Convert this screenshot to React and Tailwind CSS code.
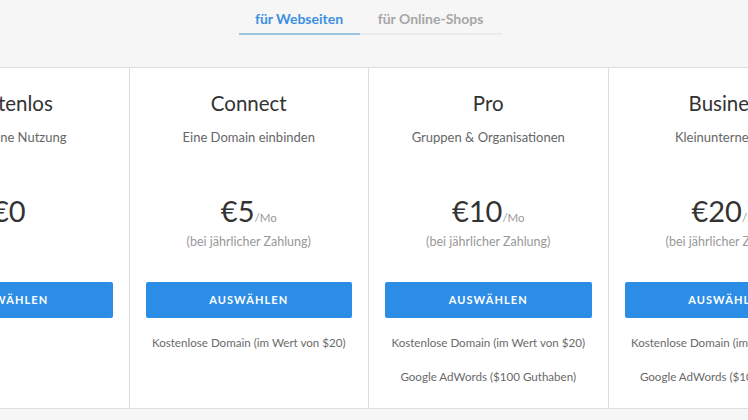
import React from "react";

const plans = [
  { title: "Kostenlos", sub: "Allgemeine Nutzung", price: "€0", mo: false, features: [] },
  { title: "Connect", sub: "Eine Domain einbinden", price: "€5", mo: true, features: ["Kostenlose Domain (im Wert von $20)"] },
  { title: "Pro", sub: "Gruppen & Organisationen", price: "€10", mo: true, features: ["Kostenlose Domain (im Wert von $20)", "Google AdWords ($100 Guthaben)"] },
  { title: "Business", sub: "Kleinunternehmen", price: "€20", mo: true, features: ["Kostenlose Domain (im Wert von $20)", "Google AdWords ($100 Guthaben)"] },
];

function Card({ p, first }) {
  return (
    <div className={`w-[239.5px] h-[342px] shrink-0 bg-white border-y border-[#dedede] ${first ? "" : "border-l"} flex flex-col items-center pt-[21px] px-[16px]`}>
      <div className="text-[20.5px] leading-[28px] text-[#333] whitespace-nowrap">{p.title}</div>
      <div className="mt-[10px] text-[13px] leading-[20px] text-[#666] whitespace-nowrap">{p.sub}</div>
      <div className="mt-[46px] h-[36px] flex items-baseline whitespace-nowrap text-[#333]">
        <span className="text-[29px] leading-[36px]">{p.price}</span>
        {p.mo && <span className="text-[11.5px] text-[#999]">/Mo</span>}
      </div>
      <div className="mt-[4px] h-[18px] text-[12.5px] leading-[18px] text-[#999] whitespace-nowrap">
        {p.mo ? "(bei jährlicher Zahlung)" : ""}
      </div>
      <button className="mt-[31px] w-full h-[36px] bg-[#2b8de6] rounded-[2px] text-white text-[11px] font-bold tracking-[0.1em]">
        AUSWÄHLEN
      </button>
      {p.features.map((f, i) => (
        <div key={i} className="mt-[16px] text-[11.6px] leading-[18px] text-[#6a6a6a] whitespace-nowrap">{f}</div>
      ))}
    </div>
  );
}

export default function App() {
  return (
    <div className="w-[748px] h-[420px] bg-[#f6f6f6] overflow-hidden" style={{ fontFamily: "Lato, 'Noto Sans', sans-serif" }}>
      <div className="flex justify-center pr-[8px] pt-[8px]">
        <div className="flex text-[14px] font-bold">
          <div className="w-[121px] h-[27px] flex items-start justify-center text-[#3b8fe0] border-b-2 border-[#9cc6e0]">für Webseiten</div>
          <div className="w-[142px] h-[27px] flex items-start justify-center text-[#a6a6a6] border-b-2 border-[#ebebeb]">für Online-Shops</div>
        </div>
      </div>
      <div className="flex justify-center pr-[12px] mt-[32px]">
        <div className="flex w-[958px] shrink-0">
          {plans.map((p, i) => (
            <Card key={i} p={p} first={i === 0} />
          ))}
        </div>
      </div>
    </div>
  );
}
